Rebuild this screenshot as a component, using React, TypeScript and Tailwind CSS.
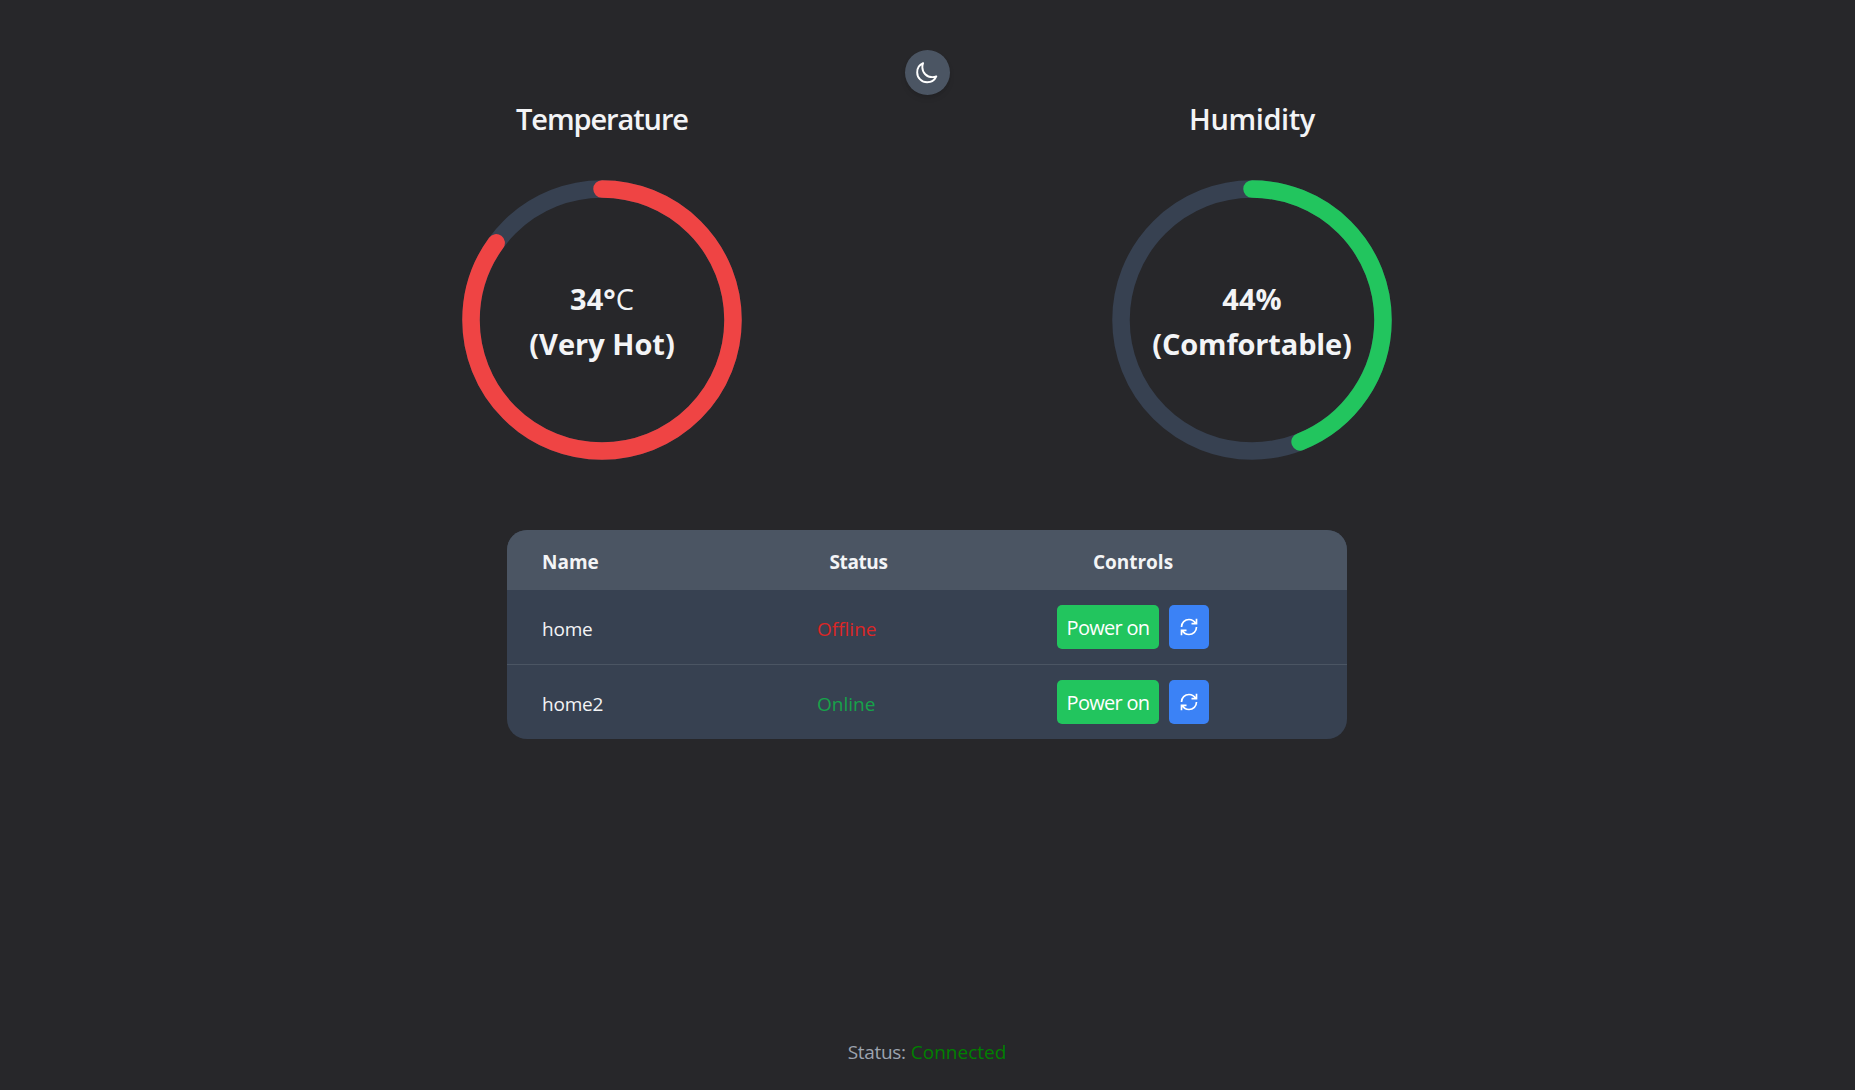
import React from "react";
import { GrPowerCycle } from "react-icons/gr";

type GaugeProps = {
  title: string;
  titleClass: string;
  value: React.ReactNode;
  label: string;
  labelClass?: string;
  fraction: number;
  strokeClass: string;
};

const RADIUS = 131;
const LENGTH = 2 * Math.PI * RADIUS;

function MoonIcon({ className }: { className: string }) {
  return (
    <svg viewBox="0 0 512 512" fill="none" stroke="currentColor" strokeWidth="42" strokeLinejoin="round" className={className}>
      <path d="M160 136c0-30.62 4.51-61.61 16-88C99.57 81.27 48 159.32 48 248c0 119.29 96.71 216 216 216 88.68 0 166.73-51.57 200-128-26.39 11.49-57.38 16-88 16-119.29 0-216-96.71-216-216z" />
    </svg>
  );
}

function Gauge({ title, titleClass, value, label, labelClass = "", fraction, strokeClass }: GaugeProps) {
  return (
    <section className="flex flex-col items-center">
      <h2 className={`h-[45px] text-[29px] leading-[45px] font-semibold ${titleClass}`}>{title}</h2>
      <div className="mt-[39px] grid size-[280px] place-items-center">
        <svg viewBox="0 0 280 280" fill="none" className="col-start-1 row-start-1 size-[280px] -rotate-90">
          <circle cx="140" cy="140" r={RADIUS} strokeWidth="17.5" className="stroke-[#374151]" />
          <circle
            cx="140"
            cy="140"
            r={RADIUS}
            strokeWidth="17.5"
            strokeLinecap="round"
            strokeDasharray={`${LENGTH * fraction} ${LENGTH}`}
            className={strokeClass}
          />
        </svg>
        <div className="col-start-1 row-start-1 pt-px text-center text-[29px] leading-[45px] font-bold whitespace-nowrap">
          <p>{value}</p>
          <p className={labelClass}>{label}</p>
        </div>
      </div>
    </section>
  );
}

const devices = [
  { name: "home", online: false },
  { name: "home2", online: true },
];

export default function App() {
  return (
    <main className="flex h-[1090px] flex-col items-center bg-[#27272a] pt-[50px] font-['Open_Sans',sans-serif] text-[19px] text-[#f3f4f6]">
      <button className="grid size-[45px] place-items-center rounded-full bg-[#4b5563] text-white shadow-md">
        <MoonIcon className="mr-px size-[23.5px]" />
      </button>

      <div className="mt-px mr-px grid w-[1300px] grid-cols-2">
        <Gauge
          title="Temperature"
          titleClass="tracking-[-1.1px]"
          value={
            <>
              34°<span className="font-normal">C</span>
            </>
          }
          label="(Very Hot)"
          fraction={0.85}
          strokeClass="stroke-[#ef4444]"
        />
        <Gauge
          title="Humidity"
          titleClass="tracking-[-0.4px]"
          value="44%"
          label="(Comfortable)"
          labelClass="tracking-[-0.15px]"
          fraction={0.44}
          strokeClass="stroke-[#22c55e]"
        />
      </div>

      <div className="mt-[70px] mr-px w-[840px] overflow-hidden rounded-[20px] bg-[#374151]">
        <div className="grid h-[60px] grid-cols-[275px_83px_157px_152px] items-center bg-[#4b5563] pt-[4px] pl-[35px] font-bold">
          <span>Name</span>
          <span className="text-center tracking-[-0.4px]">Status</span>
          <span className="col-start-4 text-center">Controls</span>
        </div>
        {devices.map((device) => (
          <div
            key={device.name}
            className="grid h-[75px] grid-cols-[275px_83px_157px_152px] items-center border-b border-[#4b5563] pl-[35px] last:h-[74px] last:border-b-0"
          >
            <span className="pt-[5px] tracking-[-0.2px]">{device.name}</span>
            <span className={`pt-[5px] ${device.online ? "text-[#16a34a]" : "text-[#dc2626]"}`}>
              {device.online ? "Online" : "Offline"}
            </span>
            <div className="col-start-4 flex gap-[10px]">
              <button className="h-[44px] w-[102px] rounded-[5px] bg-[#22c55e] pt-[2px] text-[20px] tracking-[-0.7px] whitespace-nowrap text-white">
                Power on
              </button>
              <button className="grid h-[44px] w-[40px] place-items-center rounded-[5px] bg-[#3b82f6] text-white">
                <GrPowerCycle className="size-[20px]" />
              </button>
            </div>
          </div>
        ))}
      </div>

      <footer className="mt-auto mr-px mb-[23px] flex gap-[5px] leading-[30px]">
        <span className="tracking-[-0.3px] text-[#9ca3af]">Status:</span>
        <span className="text-[#008000]">Connected</span>
      </footer>
    </main>
  );
}
